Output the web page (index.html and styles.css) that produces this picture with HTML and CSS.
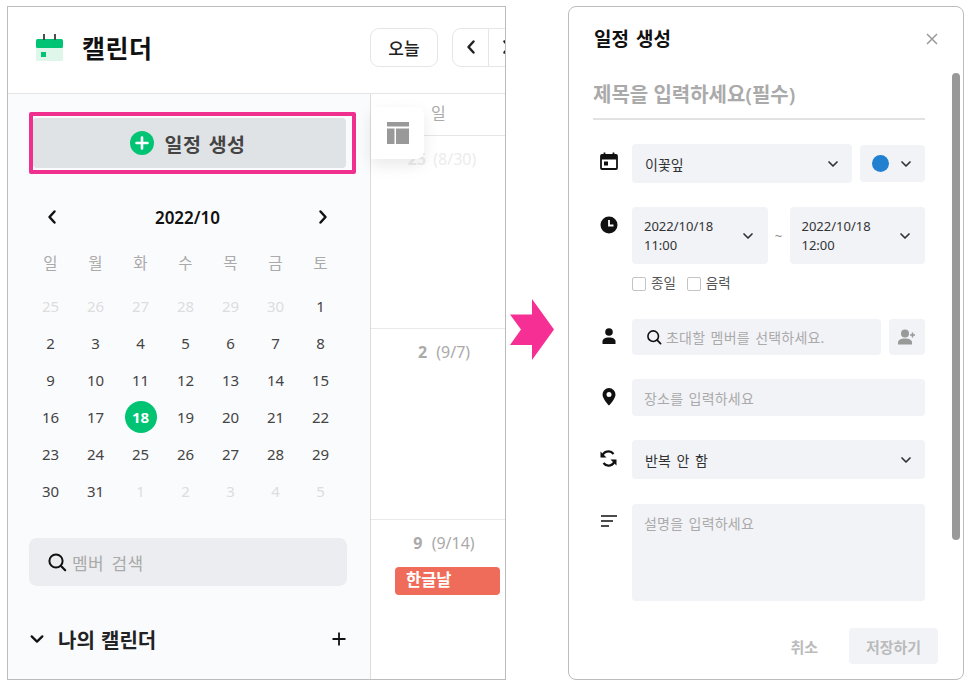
FILE: index.html
```html
<!DOCTYPE html>
<html lang="ko">
<head>
<meta charset="utf-8">
<title>캘린더</title>
<link rel="stylesheet" href="styles.css">
</head>
<body>
<svg class="defs" width="0" height="0" aria-hidden="true">
  <symbol id="chev" viewBox="0 0 12 12"><path d="M2 4l4 4 4-4" fill="none" stroke="currentColor" stroke-width="1.7" stroke-linecap="round" stroke-linejoin="round"/></symbol>
  <symbol id="left" viewBox="0 0 12 16"><path d="M8.500 2.500L3.500 8l5 5.500" fill="none" stroke="currentColor" stroke-width="2.500" stroke-linecap="round" stroke-linejoin="round"/></symbol>
  <symbol id="right" viewBox="0 0 12 16"><path d="M3.500 2.500L8.500 8l-5 5.500" fill="none" stroke="currentColor" stroke-width="2.500" stroke-linecap="round" stroke-linejoin="round"/></symbol>
  <symbol id="search" viewBox="0 0 20 20"><circle cx="9" cy="9" r="6.600" fill="none" stroke="currentColor" stroke-width="2"/><path d="M14 14l4.200 4.200" stroke="currentColor" stroke-width="2.200" stroke-linecap="round"/></symbol>
</svg>

<section class="window cal">
  <header class="cal-head">
    <div class="brand">
      <svg class="brand-icon" width="27" height="27" viewBox="0 0 27 27">
        <rect x="0" y="13" width="27" height="14" rx="1.500" fill="#dff6ea"/>
        <rect x="0" y="5" width="27" height="9" rx="1.500" fill="#00c473"/>
        <rect x="7" y="0" width="2" height="6" fill="#4a4f4c"/>
        <rect x="18" y="0" width="2" height="6" fill="#4a4f4c"/>
        <rect x="5" y="18" width="5" height="5" fill="#00c473"/>
      </svg>
      <h1 class="brand-title">캘린더</h1>
    </div>
    <div class="head-tools">
      <button class="today">오늘</button>
      <div class="pager">
        <span class="pager-cell"><svg width="12" height="16"><use href="#left"/></svg></span>
        <span class="pager-cell"><svg width="12" height="16"><use href="#right"/></svg></span>
      </div>
    </div>
  </header>
  <div class="cal-body">
    <aside class="side">
      <div class="highlight">
        <button class="create">
          <svg width="24" height="24" viewBox="0 0 24 24"><circle cx="12" cy="12" r="12" fill="#00c473"/><path d="M12 6.500v11M6.500 12h11" stroke="#fff" stroke-width="2.600" stroke-linecap="round"/></svg>
          <span>일정 생성</span>
        </button>
      </div>
      <div class="mini-nav">
        <svg width="12" height="16"><use href="#left"/></svg>
        <strong>2022/10</strong>
        <svg width="12" height="16"><use href="#right"/></svg>
      </div>
      <div class="mini-week">
        <span>일</span><span>월</span><span>화</span><span>수</span><span>목</span><span>금</span><span>토</span>
      </div>
      <div class="mini-days">
        <span class="off">25</span><span class="off">26</span><span class="off">27</span><span class="off">28</span><span class="off">29</span><span class="off">30</span><span>1</span>
        <span>2</span><span>3</span><span>4</span><span>5</span><span>6</span><span>7</span><span>8</span>
        <span>9</span><span>10</span><span>11</span><span>12</span><span>13</span><span>14</span><span>15</span>
        <span>16</span><span>17</span><span class="now"><b>18</b></span><span>19</span><span>20</span><span>21</span><span>22</span>
        <span>23</span><span>24</span><span>25</span><span>26</span><span>27</span><span>28</span><span>29</span>
        <span>30</span><span>31</span><span class="off">1</span><span class="off">2</span><span class="off">3</span><span class="off">4</span><span class="off">5</span>
      </div>
      <div class="member-search">
        <svg width="20" height="20"><use href="#search"/></svg>
        <span>멤버 검색</span>
      </div>
      <div class="my-cal">
        <svg width="16" height="16" class="my-chev"><use href="#chev"/></svg>
        <strong>나의 캘린더</strong>
        <svg class="my-plus" width="16" height="16" viewBox="0 0 16 16"><path d="M8 1.500v13M1.500 8h13" stroke="#111" stroke-width="1.800"/></svg>
      </div>
    </aside>
    <main class="agenda">
      <div class="agenda-head">일</div>
      <div class="agenda-row first"><span class="date faded"><b>25</b> (8/30)</span></div>
      <div class="agenda-row second"><span class="date"><b>2</b> (9/7)</span></div>
      <div class="agenda-row third">
        <span class="date"><b>9</b> (9/14)</span>
        <div class="holiday">한글날</div>
      </div>
      <div class="view-toggle">
        <svg width="22" height="22" viewBox="0 0 22 22"><path d="M0 0h22v4.500H0zM0 6.500h7.500V22H0zM9 6.500h13V22H9z" fill="#999"/></svg>
      </div>
    </main>
  </div>
</section>

<svg class="arrow" width="44" height="61" viewBox="0 0 44 61"><path d="M22 0l22 30.500L22 61V46H0l11-15.500L0 15.500h22z" fill="#f52f93"/></svg>

<section class="window dialog">
  <div class="dialog-head">
    <h2>일정 생성</h2>
    <svg width="12" height="12" viewBox="0 0 12 12"><path d="M1 1l10 10M11 1L1 11" stroke="#999" stroke-width="1.500"/></svg>
  </div>
  <div class="scrollbar"></div>
  <form class="form">
    <div class="title-input">제목을 입력하세요(필수)</div>

    <div class="row row-cal">
      <svg class="row-icon" width="18" height="18" viewBox="0 0 18 18"><path d="M2 3h14a1 1 0 0 1 1 1v12a1 1 0 0 1-1 1H2a1 1 0 0 1-1-1V4a1 1 0 0 1 1-1z" fill="none" stroke="#111" stroke-width="1.800"/><path d="M1 3h16v4.500H1z" fill="#111"/><path d="M4.500 0.500v3M13.500 0.500v3" stroke="#111" stroke-width="1.800"/><rect x="4" y="9.500" width="4" height="4" fill="#111"/></svg>
      <div class="field select grow tall"><span class="ko">이꽃잎</span><svg width="12" height="12"><use href="#chev"/></svg></div>
      <div class="field color"><i class="dot"></i><svg width="12" height="12"><use href="#chev"/></svg></div>
    </div>

    <div class="row row-time">
      <svg class="row-icon" width="18" height="18" viewBox="0 0 18 18"><circle cx="9" cy="9" r="8.500" fill="#111"/><path d="M9 4v5.500h4.500" fill="none" stroke="#fff" stroke-width="1.800"/></svg>
      <div class="time-wrap">
        <div class="time-pair">
          <div class="field datetime"><span class="when">2022/10/18<br>11:00</span><svg width="12" height="12"><use href="#chev"/></svg></div>
          <span class="tilde">~</span>
          <div class="field datetime"><span class="when">2022/10/18<br>12:00</span><svg width="12" height="12"><use href="#chev"/></svg></div>
        </div>
        <div class="checks">
          <label class="check"><i></i>종일</label>
          <label class="check"><i></i>음력</label>
        </div>
      </div>
    </div>

    <div class="row row-member">
      <svg class="row-icon" width="14" height="16" viewBox="0 0 14 16"><circle cx="7" cy="4" r="3.800" fill="#111"/><path d="M0.500 16v-2.500C0.500 11 3 9.500 7 9.500s6.500 1.500 6.500 4V16z" fill="#111"/></svg>
      <div class="field grow member"><svg width="16" height="16"><use href="#search"/></svg><span class="ph">초대할 멤버를 선택하세요.</span></div>
      <div class="field add"><svg width="18" height="16" viewBox="0 0 18 16"><circle cx="7" cy="4.500" r="4" fill="#999"/><path d="M0 15.500v-2C0 11 3 9.500 7 9.500s7 1.500 7 4v2z" fill="#999"/><path d="M14.500 3.500v5M12 6h5" stroke="#999" stroke-width="1.500"/></svg></div>
    </div>

    <div class="row row-place">
      <svg class="row-icon" width="14" height="18" viewBox="0 0 14 18"><path fill-rule="evenodd" d="M7 0a6.500 6.500 0 0 1 6.500 6.500C13.500 11 7 17.500 7 17.500S.5 11 .5 6.500A6.500 6.500 0 0 1 7 0zm0 4a2.500 2.500 0 1 0 0 5 2.500 2.500 0 0 0 0-5z" fill="#111"/></svg>
      <div class="field grow place"><span class="ph">장소를 입력하세요</span></div>
    </div>

    <div class="row row-repeat">
      <svg class="row-icon" width="17" height="17" viewBox="0 0 17 17"><path d="M2.200 7A6.300 6.300 0 0 1 13.500 4M14.800 10A6.300 6.300 0 0 1 3.500 13" fill="none" stroke="#111" stroke-width="2.200"/><path d="M0.500 1.500L6.500 7.500H0.500zM16.500 15.500L10.500 9.500h6z" fill="#111"/></svg>
      <div class="field select grow repeat"><span class="ko">반복 안 함</span><svg width="12" height="12"><use href="#chev"/></svg></div>
    </div>

    <div class="row row-desc">
      <svg class="row-icon" width="16" height="12" viewBox="0 0 16 12"><path d="M0 1h16M0 6h12M0 11h8" stroke="#111" stroke-width="1.700"/></svg>
      <div class="field grow desc"><span class="ph">설명을 입력하세요</span></div>
    </div>

    <div class="actions">
      <span class="cancel">취소</span>
      <span class="save">저장하기</span>
    </div>
  </form>
</section>
</body>
</html>
```

FILE: styles.css
```css
* { box-sizing: border-box; }
html, body { margin: 0; height: 100%; }
body {
  width: 973px;
  height: 688px;
  padding: 6px 0 0 7px;
  display: flex;
  align-items: flex-start;
  background: #fff;
  font-family: "Noto Sans", "Noto Sans CJK KR", sans-serif;
  color: #333;
  overflow: hidden;
}
.defs { position: absolute; }
svg { display: block; flex: none; }
h1, h2 { margin: 0; }
button { font: inherit; }

.window {
  height: 674px;
  background: #fff;
  border: 1px solid #bcbcbc;
  overflow: hidden;
  position: relative;
}

/* left window */
.cal { width: 499px; display: flex; flex-direction: column; }
.cal-head {
  height: 87px;
  flex: none;
  display: flex;
  align-items: center;
  border-bottom: 1px solid #e4e4e4;
  padding-bottom: 6px;
}
.brand { width: 362px; flex: none; display: flex; align-items: center; gap: 19px; padding-left: 28px; }
.brand-title { font-size: 25px; line-height: 36px; font-weight: 700; color: #111; letter-spacing: 0.5px; padding-top: 2px; }
.head-tools { display: flex; gap: 14px; flex: none; }
.today {
  width: 68px;
  height: 39px;
  background: #fff;
  border: 1px solid #e6e6e6;
  border-radius: 9px;
  font-size: 17px;
  font-weight: 500;
  color: #222;
  padding: 0;
}
.pager { display: flex; border: 1px solid #e6e6e6; border-radius: 9px; height: 39px; width: 80px; flex: none; }
.pager-cell { width: 35px; display: flex; align-items: center; justify-content: center; color: #222; }
.pager-cell + .pager-cell { border-left: 1px solid #e6e6e6; width: 36px; }

.cal-body { flex: 1; display: flex; min-height: 0; }
.side {
  width: 363px;
  flex: none;
  background: #fafbfd;
  border-right: 1px solid #dcdcdc;
  padding: 18px 0 0 21px;
}
.highlight {
  width: 327px;
  height: 62px;
  border: 4px solid #f0308f;
  border-radius: 2px;
  padding: 2px 6px 2px 0;
}
.create {
  width: 100%;
  height: 100%;
  background: #e0e3e6;
  border: 0;
  border-radius: 4px;
  display: flex;
  align-items: center;
  justify-content: center;
  gap: 11px;
  padding: 0 4px 0 0;
  font-size: 19.500px;
  font-weight: 700;
  color: #444;
}
.create span { letter-spacing: 0.400px; word-spacing: 2px; }
.mini-nav {
  width: 283px;
  margin: 32px 0 0 17px;
  height: 22px;
  display: flex;
  align-items: center;
  justify-content: space-between;
  color: #111;
}
.mini-nav svg { width: 12px; height: 16px; }
.mini-nav strong { font-size: 17px; font-weight: 600; }
.mini-week, .mini-days {
  display: grid;
  grid-template-columns: repeat(7, 45px);
  margin-left: -1px;
  text-align: center;
}
.mini-week { margin-top: 23px; height: 24px; line-height: 24px; font-size: 15.500px; color: #aaa; }
.mini-days { margin-top: 12px; grid-auto-rows: 37px; font-size: 15px; color: #444; }
.mini-days span { display: flex; align-items: center; justify-content: center; }
.mini-days .off { color: #dddddd; }
.now b {
  width: 32px;
  height: 32px;
  border-radius: 50%;
  background: #00c473;
  color: #fff;
  display: flex;
  align-items: center;
  justify-content: center;
  font-size: 15px;
}
.member-search {
  width: 318px;
  height: 48px;
  margin: 29px 0 0 0;
  background: #ecedf0;
  border-radius: 8px;
  display: flex;
  align-items: center;
  gap: 5px;
  padding-left: 18px;
  color: #111;
}
.member-search span { font-size: 17px; color: #aaa; letter-spacing: 0.300px; word-spacing: 3px; }
.my-cal { display: flex; align-items: center; width: 318px; height: 26px; margin-top: 40px; color: #111; }
.my-chev { margin-right: 13px; }
.my-cal strong { font-size: 20px; font-weight: 600; color: #222; word-spacing: 1px; }
.my-plus { margin-left: auto; margin-right: 0; }

.agenda { flex: 1; position: relative; min-width: 0; background: #fff; }
.agenda-head {
  height: 42px;
  border-bottom: 1px solid #e6e6e6;
  padding: 5px 0 0 60px;
  font-size: 16px;
  line-height: 28px;
  color: #aaa;
}
.agenda-row { text-align: center; }
.first { height: 193px; border-bottom: 1px solid #e9e9e9; padding: 11px 0 0 8px; }
.second { height: 191px; border-bottom: 1px solid #e9e9e9; padding: 11px 0 0 12px; }
.third { padding: 11px 0 0 12px; }
.date { font-size: 16px; line-height: 24px; color: #aaa; display: block; }
.date b { font-size: 16px; margin-right: 5px; color: #aaa; }
.date.faded { color: #ececec; }
.date.faded b { color: #ececec; margin-right: 3px; }
.holiday {
  width: 105px;
  height: 28px;
  margin: 12px 0 0 12px;
  background: #f06c5a;
  border-radius: 4px;
  color: #fff;
  font-size: 16.500px;
  font-weight: 600;
  line-height: 26px;
  text-align: left;
  padding-left: 11px;
}
.view-toggle {
  position: absolute;
  left: 0;
  top: 13px;
  width: 53px;
  height: 52px;
  background: #fff;
  border-radius: 0 8px 8px 0;
  box-shadow: 0 6px 16px rgba(0,0,0,.09);
  display: flex;
  align-items: center;
  justify-content: center;
}

.arrow { margin: 293px 14px 0 4px; }

/* right window */
.dialog { width: 396px; border-radius: 8px; }
.dialog-head {
  display: flex;
  align-items: center;
  justify-content: space-between;
  height: 62px;
  padding: 2px 25px 0 25px;
}
.dialog-head h2 { font-size: 19px; line-height: 26px; font-weight: 600; color: #111; word-spacing: 2px; }
.scrollbar {
  position: absolute;
  right: 3px;
  top: 66px;
  width: 8px;
  height: 467px;
  background: #999;
  border-radius: 4px;
}
.form { padding: 0 38px 0 24px; }
.title-input {
  height: 51px;
  margin-top: 0;
  border-bottom: 2px solid #e2e2e2;
  font-size: 20px;
  font-weight: 600;
  line-height: 52px;
  color: #aaa;
}
.row { display: flex; gap: 8px; position: relative; padding-left: 39px; }
.row-icon { position: absolute; }
.field {
  background: #f2f3f7;
  border-radius: 4px;
  display: flex;
  align-items: center;
  font-size: 13px;
  color: #333;
}
.ko { font-size: 14px; word-spacing: 2px; }
.grow { flex: 1; min-width: 0; }
.select { justify-content: space-between; padding: 0 13px 0 13px; }
.row-cal { margin-top: 24px; align-items: flex-start; }
.row-cal .row-icon { left: 7px; top: 8px; }
.tall { height: 39px; }
.color { width: 65px; height: 37px; margin-top: 1px; gap: 11px; padding-left: 12px; }
.dot { width: 17px; height: 17px; border-radius: 50%; background: #2280d0; display: block; }
.row-time { margin-top: 24px; }
.row-time .row-icon { left: 7px; top: 9px; }
.time-wrap { flex: 1; }
.time-pair { display: flex; align-items: center; }
.datetime {
  flex: 1;
  height: 57px;
  justify-content: space-between;
  padding: 0 14px 0 12px;
  font-size: 13px;
  line-height: 19px;
}
.when { padding-top: 1px; }
.tilde { width: 22px; text-align: center; color: #888; font-size: 13px; flex: none; }
.checks { display: flex; gap: 11px; margin-top: 12px; height: 15px; }
.check { display: flex; align-items: center; gap: 5px; font-size: 13.500px; color: #555; line-height: 15px; }
.check i { width: 14px; height: 14px; display: block; border: 1px solid #c4c4c4; border-radius: 2px; background: #fff; }
.row-member { margin-top: 28px; height: 36px; }
.row-member .row-icon { left: 9px; top: 9px; }
.member { padding-left: 14px; gap: 4px; color: #111; }
.add { width: 36px; justify-content: center; flex: none; }
.ph { color: #aaa; font-size: 14px; letter-spacing: 0.200px; word-spacing: 1.500px; }
.row-place { margin-top: 24px; }
.row-place .row-icon { left: 9px; top: 9px; }
.place { height: 37px; padding-left: 12px; }
.row-repeat { margin-top: 24px; }
.row-repeat .row-icon { left: 7px; top: 10px; }
.repeat { height: 39px; padding-left: 13px; }
.row-desc { margin-top: 25px; }
.row-desc .row-icon { left: 8px; top: 11px; }
.desc { height: 97px; align-items: flex-start; padding: 9px 0 0 12px; }
.actions { display: flex; align-items: center; justify-content: flex-end; margin: 27px -13px 0 0; gap: 31px; }
.cancel { font-size: 15px; font-weight: 600; color: #bbb; }
.save {
  width: 89px;
  height: 36px;
  border-radius: 4px;
  background: #f2f3f7;
  color: #bbb;
  font-size: 15px;
  font-weight: 600;
  display: flex;
  align-items: center;
  justify-content: center;
}
```
